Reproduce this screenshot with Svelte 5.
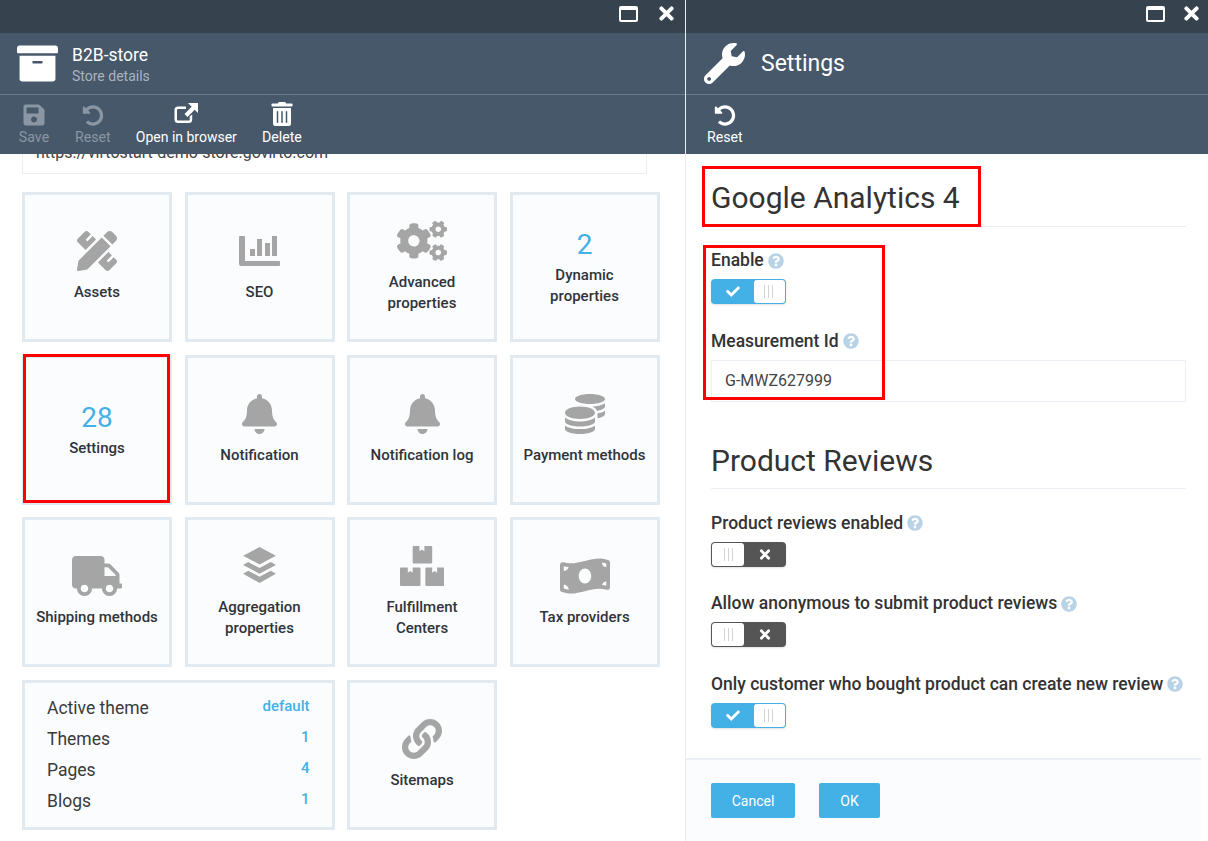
<script>
    const icons = {
        ruler: ["0 0 512 512", "M109.46 244.04l134.58-134.56-44.12-44.12-61.68 61.68a7.919 7.919 0 0 1-11.21 0l-11.21-11.21c-3.1-3.1-3.1-8.12 0-11.21l61.68-61.68-33.64-33.65C131.47-3.1 111.39-3.1 99 9.29L9.29 99c-12.38 12.39-12.39 32.47 0 44.86l100.17 100.18zm388.47-116.8c18.76-18.76 18.75-49.17 0-67.93l-45.25-45.25c-18.76-18.76-49.18-18.76-67.95 0l-46.02 46.01 113.2 113.2 46.02-46.03zM316.08 82.71l-297 296.96L.32 487.11c-2.53 14.49 10.09 27.11 24.59 24.56l107.45-18.84L429.28 195.9 316.08 82.71zm186.63 285.43l-33.64-33.64-61.68 61.68c-3.1 3.1-8.12 3.1-11.21 0l-11.21-11.21c-3.09-3.1-3.09-8.12 0-11.21l61.68-61.68-44.14-44.14L267.93 402.5l100.21 100.2c12.39 12.39 32.47 12.39 44.86 0l89.71-89.7c12.39-12.39 12.39-32.47 0-44.86z"],
        chart: ["0 0 41 30", "M1 0h4a1 1 0 0 1 1 1v24h34a1 1 0 0 1 1 1v3a1 1 0 0 1-1 1H2a2 2 0 0 1-2-2V1a1 1 0 0 1 1-1zM11 13h5v7h-5zM18 3h5v17h-5zM26 7h5v13h-5zM33 0h5v20h-5z"],
        cogs: ["0 0 640 512", "M512.1 191l-8.2 14.3c-3 5.3-9.4 7.5-15.1 5.4-11.8-4.4-22.6-10.7-32.1-18.6-4.6-3.8-5.8-10.5-2.8-15.7l8.2-14.3c-6.9-8-12.3-17.3-15.9-27.4h-16.5c-6 0-11.2-4.3-12.2-10.3-2-12-2.1-24.6 0-37.1 1-6 6.2-10.4 12.2-10.4h16.5c3.6-10.1 9-19.4 15.9-27.4l-8.2-14.3c-3-5.2-1.9-11.9 2.8-15.7 9.5-7.9 20.4-14.2 32.1-18.6 5.7-2.1 12.1.1 15.1 5.4l8.2 14.3c10.5-1.9 21.2-1.9 31.7 0L552 6.3c3-5.3 9.4-7.5 15.1-5.4 11.8 4.4 22.6 10.7 32.1 18.6 4.6 3.8 5.8 10.5 2.8 15.7l-8.2 14.3c6.9 8 12.3 17.3 15.9 27.4h16.5c6 0 11.2 4.3 12.2 10.3 2 12 2.1 24.6 0 37.1-1 6-6.2 10.4-12.2 10.4h-16.5c-3.6 10.1-9 19.4-15.9 27.4l8.2 14.3c3 5.2 1.9 11.9-2.8 15.7-9.5 7.9-20.4 14.2-32.1 18.6-5.7 2.1-12.1-.1-15.1-5.4l-8.2-14.3c-10.4 1.9-21.2 1.9-31.7 0zm-10.5-58.8c38.5 29.6 82.4-14.3 52.8-52.8-38.5-29.7-82.4 14.3-52.8 52.8zM386.3 286.1l33.7 16.8c10.1 5.8 14.5 18.1 10.5 29.1-8.9 24.2-26.4 46.4-42.6 65.8-7.4 8.9-20.2 11.1-30.3 5.3l-29.1-16.8c-16 13.7-34.6 24.6-54.9 31.7v33.6c0 11.6-8.3 21.6-19.7 23.6-24.6 4.2-50.4 4.4-75.9 0-11.5-2-20-11.9-20-23.6V418c-20.3-7.2-38.9-18-54.9-31.7L74 403c-10 5.8-22.9 3.6-30.3-5.3-16.2-19.4-33.3-41.6-42.2-65.7-4-10.9.4-23.2 10.5-29.1l33.3-16.8c-3.9-20.9-3.9-42.4 0-63.4L12 205.8c-10.1-5.8-14.6-18.1-10.5-29 8.9-24.2 26-46.4 42.2-65.8 7.4-8.9 20.2-11.1 30.3-5.3l29.1 16.8c16-13.7 34.6-24.6 54.9-31.7V57.1c0-11.5 8.2-21.5 19.6-23.5 24.6-4.2 50.5-4.4 76-.1 11.5 2 20 11.9 20 23.6v33.6c20.3 7.2 38.9 18 54.9 31.7l29.1-16.8c10-5.8 22.9-3.6 30.3 5.3 16.2 19.4 33.2 41.6 42.1 65.8 4 10.9.1 23.2-10 29.1l-33.7 16.8c3.9 21 3.9 42.5 0 63.5zm-117.6 21.1c59.2-77-28.7-164.9-105.7-105.7-59.2 77 28.7 164.9 105.7 105.7zm243.4 182.7l-8.2 14.3c-3 5.3-9.4 7.5-15.1 5.4-11.8-4.4-22.6-10.7-32.1-18.6-4.6-3.8-5.8-10.5-2.8-15.7l8.2-14.3c-6.9-8-12.3-17.3-15.9-27.4h-16.5c-6 0-11.2-4.3-12.2-10.3-2-12-2.1-24.6 0-37.1 1-6 6.2-10.4 12.2-10.4h16.5c3.6-10.1 9-19.4 15.9-27.4l-8.2-14.3c-3-5.2-1.9-11.9 2.8-15.7 9.5-7.9 20.4-14.2 32.1-18.6 5.7-2.1 12.1.1 15.1 5.4l8.2 14.3c10.5-1.9 21.2-1.9 31.7 0l8.2-14.3c3-5.3 9.4-7.5 15.1-5.4 11.8 4.4 22.6 10.7 32.1 18.6 4.6 3.8 5.8 10.5 2.8 15.7l-8.2 14.3c6.9 8 12.3 17.3 15.9 27.4h16.5c6 0 11.2 4.3 12.2 10.3 2 12 2.1 24.6 0 37.1-1 6-6.2 10.4-12.2 10.4h-16.5c-3.6 10.1-9 19.4-15.9 27.4l8.2 14.3c3 5.2 1.9 11.9-2.8 15.7-9.5 7.9-20.4 14.2-32.1 18.6-5.7 2.1-12.1-.1-15.1-5.4l-8.2-14.3c-10.4 1.9-21.2 1.9-31.7 0zM501.6 431c38.5 29.6 82.4-14.3 52.8-52.8-38.5-29.6-82.4 14.3-52.8 52.8z"],
        bell: ["0 0 448 512", "M224 512c35.32 0 63.97-28.65 63.97-64H160.03c0 35.35 28.65 64 63.97 64zm215.39-149.71c-19.32-20.76-55.47-51.99-55.47-154.29 0-77.7-54.48-139.9-127.94-155.16V32c0-17.67-14.32-32-31.98-32s-31.98 14.33-31.98 32v20.84C118.56 68.1 64.08 130.3 64.08 208c0 102.3-36.15 133.53-55.47 154.29-6 6.45-8.66 14.16-8.61 21.71.11 16.4 12.98 32 32.1 32h383.8c19.12 0 32-15.6 32.1-32 .05-7.55-2.61-15.27-8.61-21.71z"],
        coins: ["0 0 512 512", "M0 405.3V448c0 35.3 86 64 192 64s192-28.7 192-64v-42.7C342.7 434.4 267.2 448 192 448S41.3 434.4 0 405.3zM320 128c106 0 192-28.7 192-64S426 0 320 0 128 28.7 128 64s86 64 192 64zM0 300.4V352c0 35.3 86 64 192 64s192-28.7 192-64v-51.6c-41.3 34-116.9 51.6-192 51.6S41.3 334.4 0 300.4zm416 11c57.3-11.1 96-31.7 96-55.4v-42.7c-23.2 16.4-57.3 27.6-96 34.5v63.6zM192 160C86 160 0 195.8 0 240s86 80 192 80 192-35.8 192-80-86-80-192-80zm219.3 56.3c60-10.8 100.7-32 100.7-56.3v-42.7c-35.5 25.1-96.5 38.6-160.7 41.8 29.5 14.3 51.2 33.5 60 57.2z"],
        truck: ["0 0 640 512", "M624 352h-16V243.9c0-12.7-5.1-24.9-14.1-33.9L494 110.1c-9-9-21.2-14.1-33.9-14.1H416V48c0-26.5-21.5-48-48-48H48C21.5 0 0 21.5 0 48v320c0 26.5 21.5 48 48 48h16c0 53 43 96 96 96s96-43 96-96h128c0 53 43 96 96 96s96-43 96-96h48c8.8 0 16-7.2 16-16v-32c0-8.8-7.2-16-16-16zM160 464c-26.5 0-48-21.5-48-48s21.5-48 48-48 48 21.5 48 48-21.5 48-48 48zm320 0c-26.5 0-48-21.5-48-48s21.5-48 48-48 48 21.5 48 48-21.5 48-48 48zm80-208H416V144h44.1l99.9 99.9V256z"],
        layers: ["0 0 40 40", "M20 2L36 10.5 20 19 4 10.5zM9 16.5l11 6 11-6 5 3-16 8.500-16-8.500zM9 25l11 6 11-6 5 3-16 9-16-9z"],
        boxes: ["0 0 46 41", "M13 0h7v5.500l2.500-2 2.500 2V0h7a1 1 0 0 1 1 1v16a1 1 0 0 1-1 1H14a1 1 0 0 1-1-1V1a1 1 0 0 1 1-1zM1 22h7v5.500l2.500-2 2.500 2V22h7a1 1 0 0 1 1 1v17a1 1 0 0 1-1 1H1a1 1 0 0 1-1-1V23a1 1 0 0 1 1-1zM27 22h6v5.500l2.500-2 2.500 2V22h7a1 1 0 0 1 1 1v17a1 1 0 0 1-1 1H27a1 1 0 0 1-1-1V23a1 1 0 0 1 1-1z"],
        money: ["0 0 640 512", "M621.16 54.46C582.37 38.19 543.55 32 504.75 32c-123.17-.01-246.33 62.34-369.5 62.34-30.89 0-61.76-3.92-92.65-13.72-3.47-1.1-6.95-1.62-10.35-1.62C15.04 79 0 92.32 0 110.81v317.26c0 12.63 7.23 24.6 18.84 29.46C57.63 473.81 96.45 480 135.25 480c123.17 0 246.34-62.35 369.51-62.35 30.89 0 61.76 3.92 92.65 13.72 3.47 1.1 6.95 1.62 10.35 1.62 17.21 0 32.25-13.32 32.25-31.81V83.93c-.01-12.64-7.24-24.6-18.85-29.47zM48 132.22c20.12 5.04 41.12 7.57 62.72 8.93C104.84 170.54 79 192.69 48 192.69v-60.47zm0 285v-47.78c34.37 0 62.18 27.27 63.71 61.4-22.53-1.81-43.59-6.31-63.71-13.62zM320 352c-44.19 0-80-42.99-80-96 0-53.02 35.82-96 80-96s80 42.98 80 96c0 53.03-35.83 96-80 96zm272 27.78c-17.52-4.39-35.71-6.85-54.32-8.44 5.87-26.08 27.5-45.88 54.32-49.28v57.72zm0-236.11c-30.89-3.91-54.86-29.7-55.81-61.55 19.54 2.17 38.09 6.69 55.81 14.47v47.08z"],
        link: ["0 0 512 512", "M326.612 185.391c59.747 59.809 58.927 155.698.36 214.59-.11.12-.24.25-.36.37l-67.2 67.2c-59.27 59.27-155.699 59.262-214.96 0-59.27-59.26-59.27-155.7 0-214.96l37.106-37.106c9.84-9.84 26.786-3.3 27.294 10.606.648 17.722 3.826 35.527 9.69 52.721 1.986 5.822.567 12.262-3.783 16.612l-13.087 13.087c-28.026 28.026-28.905 73.66-1.155 101.96 28.024 28.579 74.086 28.749 102.325.51l67.2-67.19c28.191-28.191 28.073-73.757 0-101.83-3.701-3.694-7.429-6.564-10.341-8.569a16.037 16.037 0 0 1-6.947-12.606c-.396-10.567 3.348-21.456 11.698-29.806l21.054-21.055c5.521-5.521 14.182-6.199 20.584-1.731a152.482 152.482 0 0 1 20.522 17.197zM467.547 44.449c-59.261-59.262-155.69-59.27-214.96 0l-67.2 67.2c-.12.12-.25.25-.36.37-58.566 58.892-59.387 154.781.36 214.59a152.454 152.454 0 0 0 20.521 17.196c6.402 4.468 15.064 3.789 20.584-1.731l21.054-21.055c8.35-8.35 12.094-19.239 11.698-29.806a16.037 16.037 0 0 0-6.947-12.606c-2.912-2.005-6.64-4.875-10.341-8.569-28.073-28.073-28.191-73.639 0-101.83l67.2-67.19c28.239-28.239 74.3-28.069 102.325.51 27.75 28.3 26.872 73.934-1.155 101.96l-13.087 13.087c-4.35 4.35-5.769 10.79-3.783 16.612 5.864 17.194 9.042 34.999 9.69 52.721.509 13.906 17.454 20.446 27.294 10.606l37.106-37.106c59.271-59.259 59.271-155.699.001-214.959z"],
        save: ["0 0 448 512", "M433.941 129.941l-83.882-83.882A48 48 0 0 0 316.118 32H48C21.49 32 0 53.49 0 80v352c0 26.51 21.49 48 48 48h352c26.51 0 48-21.49 48-48V163.882a48 48 0 0 0-14.059-33.941zM224 416c-35.346 0-64-28.654-64-64 0-35.346 28.654-64 64-64s64 28.654 64 64c0 35.346-28.654 64-64 64zm96-304.52V212c0 6.627-5.373 12-12 12H76c-6.627 0-12-5.373-12-12V108c0-6.627 5.373-12 12-12h228.52c3.183 0 6.235 1.264 8.485 3.515l3.48 3.48A11.996 11.996 0 0 1 320 111.48z"],
        undo: ["0 0 512 512", "M255.545 8c-66.269.119-126.438 26.233-170.86 68.685L48.971 40.971C33.851 25.851 8 36.559 8 57.941V192c0 13.255 10.745 24 24 24h134.059c21.382 0 32.09-25.851 16.971-40.971l-41.75-41.75c30.864-28.899 70.801-44.907 113.23-45.273 92.398-.798 170.283 73.977 169.484 169.442C423.236 348.009 349.816 424 256 424c-41.127 0-79.997-14.678-110.63-41.556-4.743-4.161-11.906-3.908-16.368.553L89.34 422.659c-4.872 4.872-4.631 12.815.482 17.433C133.798 479.813 192.074 504 256 504c136.966 0 247.999-111.033 248-247.998C504.001 119.193 392.354 7.755 255.545 8z"],
        open: ["0 0 24 20", "M18.200 11.500v5a3.500 3.500 0 0 1-3.500 3.500H4a3.500 3.500 0 0 1-3.500-3.500V7A3.500 3.500 0 0 1 4 3.500h8V6H4A1 1 0 0 0 3 7v9.500a1 1 0 0 0 1 1h10.700a1 1 0 0 0 1-1v-3zM14 0h10v10l-3.300-3.300-7.200 7.200-3-3 7.200-7.200z"],
        trash: ["0 0 448 512", "M32 464a48 48 0 0 0 48 48h288a48 48 0 0 0 48-48V128H32zm272-256a16 16 0 0 1 32 0v224a16 16 0 0 1-32 0zm-96 0a16 16 0 0 1 32 0v224a16 16 0 0 1-32 0zm-96 0a16 16 0 0 1 32 0v224a16 16 0 0 1-32 0zM432 32H312l-9.400-18.700A24 24 0 0 0 281.100 0H166.800a23.720 23.720 0 0 0-21.400 13.300L136 32H16A16 16 0 0 0 0 48v32a16 16 0 0 0 16 16h416a16 16 0 0 0 16-16V48a16 16 0 0 0-16-16z"],
        archive: ["0 0 512 512", "M32 448c0 17.700 14.300 32 32 32h384c17.700 0 32-14.300 32-32V160H32v288zm160-212c0-6.600 5.400-12 12-12h104c6.600 0 12 5.400 12 12v8c0 6.600-5.400 12-12 12H204c-6.600 0-12-5.400-12-12v-8zM480 32H32C14.300 32 0 46.300 0 64v48c0 8.800 7.200 16 16 16h480c8.800 0 16-7.200 16-16V64c0-17.700-14.300-32-32-32z"],
        wrench: ["0 0 512 512", "M507.730 109.100c-2.240-9.030-13.540-12.090-20.120-5.510l-74.360 74.360-67.880-11.310-11.310-67.880 74.360-74.360c6.620-6.620 3.430-17.900-5.660-20.160-47.380-11.740-99.550.91-136.580 37.930-39.640 39.640-50.550 97.100-34.050 147.200L18.740 402.760c-24.990 24.990-24.990 65.510 0 90.500 24.990 24.990 65.510 24.990 90.500 0l213.210-213.210c50.120 16.710 107.470 5.680 147.370-34.220 37.070-37.070 49.700-89.320 37.910-136.730zM64 472c-13.250 0-24-10.750-24-24 0-13.260 10.750-24 24-24s24 10.740 24 24c0 13.250-10.750 24-24 24z"],
        times: ["0 0 352 512", "M242.720 256l100.070-100.070c12.280-12.280 12.280-32.190 0-44.480l-22.240-22.240c-12.280-12.280-32.190-12.280-44.480 0L176 189.280 75.930 89.210c-12.280-12.280-32.190-12.280-44.480 0L9.210 111.450c-12.280 12.280-12.280 32.190 0 44.480L109.280 256 9.210 356.070c-12.280 12.280-12.280 32.190 0 44.480l22.240 22.240c12.280 12.280 32.200 12.280 44.480 0L176 322.720l100.070 100.070c12.280 12.280 32.200 12.280 44.480 0l22.240-22.240c12.280-12.280 12.280-32.190 0-44.480L242.720 256z"],
        check: ["0 0 512 512", "M173.898 439.404l-166.400-166.400c-9.997-9.997-9.997-26.206 0-36.204l36.203-36.204c9.997-9.998 26.207-9.998 36.204 0L192 312.690 432.095 72.596c9.997-9.997 26.207-9.997 36.204 0l36.203 36.204c9.997 9.997 9.997 26.206 0 36.204l-294.400 294.401c-9.998 9.997-26.207 9.997-36.204-.001z"],
        help: ["0 0 512 512", "M504 256c0 136.997-111.043 248-248 248S8 392.997 8 256C8 119.083 119.043 8 256 8s248 111.083 248 248zM262.655 90c-54.497 0-89.255 22.957-116.549 63.758-3.536 5.286-2.353 12.415 2.715 16.258l34.699 26.310c5.205 3.947 12.621 3.008 16.665-2.122 17.864-22.658 30.113-35.797 57.303-35.797 20.429 0 45.698 13.148 45.698 32.958 0 14.976-12.363 22.667-32.534 33.976C247.128 238.528 216 254.941 216 296v4c0 6.627 5.373 12 12 12h56c6.627 0 12-5.373 12-12v-1.333c0-28.462 83.186-29.647 83.186-106.667 0-58.002-60.165-102-116.531-102zM256 338c-25.365 0-46 20.635-46 46 0 25.364 20.635 46 46 46s46-20.636 46-46c0-25.365-20.635-46-46-46z"]
    };

    const tiles = [
        { icon: "ruler", label: "Assets" },
        { icon: "chart", label: "SEO" },
        { icon: "cogs", label: "Advanced properties" },
        { count: 2, label: "Dynamic properties" },
        { count: 28, label: "Settings" },
        { icon: "bell", label: "Notification" },
        { icon: "bell", label: "Notification log" },
        { icon: "coins", label: "Payment methods" },
        { icon: "truck", label: "Shipping methods" },
        { icon: "layers", label: "Aggregation properties" },
        { icon: "boxes", label: "Fulfillment Centers" },
        { icon: "money", label: "Tax providers" }
    ];

    const themeRows = [
        { name: "Active theme", value: "default" },
        { name: "Themes", value: 1 },
        { name: "Pages", value: 4 },
        { name: "Blogs", value: 1 }
    ];

    const reviewFields = [
        { label: "Product reviews enabled", on: false },
        { label: "Allow anonymous to submit product reviews", on: false },
        { label: "Only customer who bought product can create new review", on: true }
    ];
</script>

{#snippet icon(name, cls)}
    <svg class={cls} viewBox={icons[name][0]} aria-hidden="true"><path d={icons[name][1]} /></svg>
{/snippet}

{#snippet windowControls()}
    <div class="topbar">
        <span class="maximize"></span>
        {@render icon("times", "close")}
    </div>
{/snippet}

{#snippet toggle(on)}
    <div class="toggle" class:on>
        <span class="state">{@render icon(on ? "check" : "times", "state-icon")}</span>
        <span class="knob"><i></i><i></i><i></i></span>
    </div>
{/snippet}

{#snippet label(text)}
    <div class="field-label">{text} {@render icon("help", "help")}</div>
{/snippet}

<div class="page">
    <section class="blade left">
        {@render windowControls()}
        <header class="head">
            {@render icon("archive", "head-icon")}
            <div class="head-text">
                <div class="title">B2B-store</div>
                <div class="subtitle">Store details</div>
            </div>
        </header>
        <nav class="toolbar">
            <div class="tool disabled">{@render icon("save", "tool-icon")}<span>Save</span></div>
            <div class="tool disabled">{@render icon("undo", "tool-icon undo")}<span>Reset</span></div>
            <div class="tool narrow">{@render icon("open", "tool-icon open")}<span>Open in browser</span></div>
            <div class="tool">{@render icon("trash", "tool-icon trash")}<span>Delete</span></div>
        </nav>
        <div class="body">
            <div class="url">https://virtostart-demo-store.govirto.com</div>
            <div class="grid">
                {#each tiles as tile}
                    <div class="tile" class:marked={tile.label === "Settings"}>
                        {#if tile.icon}
                            {@render icon(tile.icon, "tile-icon " + tile.icon)}
                        {:else}
                            <div class="count">{tile.count}</div>
                        {/if}
                        <div class="tile-label">{tile.label}</div>
                    </div>
                {/each}
                <div class="tile themes">
                    {#each themeRows as row}
                        <div class="theme-row">
                            <span>{row.name}</span>
                            <b>{row.value}</b>
                        </div>
                    {/each}
                </div>
                <div class="tile">
                    {@render icon("link", "tile-icon")}
                    <div class="tile-label">Sitemaps</div>
                </div>
            </div>
        </div>
    </section>

    <section class="blade right">
        {@render windowControls()}
        <header class="head">
            {@render icon("wrench", "head-icon wrench")}
            <div class="big-title">Settings</div>
        </header>
        <nav class="toolbar">
            <div class="tool">{@render icon("undo", "tool-icon undo")}<span>Reset</span></div>
        </nav>
        <div class="body form">
            <div class="marked-wrap">
                <h2>Google Analytics 4</h2>
                <span class="red heading-mark"></span>
                <span class="red fields-mark"></span>
            </div>
            <div class="field">
                {@render label("Enable")}
                {@render toggle(true)}
            </div>
            <div class="field">
                {@render label("Measurement Id")}
                <div class="input">G-MWZ627999</div>
            </div>
            <h2 class="second">Product Reviews</h2>
            {#each reviewFields as item}
                <div class="field">
                    {@render label(item.label)}
                    {@render toggle(item.on)}
                </div>
            {/each}
        </div>
        <footer class="foot">
            <button>Cancel</button>
            <button class="ok">OK</button>
        </footer>
    </section>
</div>

<style>
    :global(body) {
        margin: 0;
        background: #fff;
    }

    .page {
        display: flex;
        width: 1208px;
        height: 841px;
        overflow: hidden;
        font-family: Roboto, "Liberation Sans", sans-serif;
        color: #333;
    }

    .blade {
        display: flex;
        flex-direction: column;
        height: 841px;
        min-width: 0;
    }

    .left {
        width: 685px;
        border-right: 1px solid #e9edf1;
    }

    .right {
        width: 522px;
    }

    .topbar {
        box-sizing: border-box;
        display: flex;
        align-items: center;
        justify-content: flex-end;
        height: 33px;
        padding: 0 11px 6px 0;
        gap: 21px;
        background: #36434f;
    }

    .right .topbar {
        padding-right: 9px;
        gap: 19px;
    }

    .maximize {
        box-sizing: border-box;
        width: 19px;
        height: 16px;
        border: 2px solid #fff;
        border-top-width: 4px;
        border-radius: 2px;
    }

    .close {
        width: 15px;
        height: 21px;
        fill: #fff;
    }

    .head {
        display: flex;
        align-items: center;
        height: 61px;
        padding-left: 17px;
        gap: 14px;
        background: #47586b;
        border-bottom: 1px solid #6c7a89;
        color: #fff;
    }

    .head-icon {
        width: 41px;
        height: 41px;
        fill: #fff;
    }

    .head-text {
        margin-top: 4px;
    }

    .title {
        font-size: 17.5px;
        line-height: 21px;
    }

    .subtitle {
        font-size: 14px;
        line-height: 20px;
        color: #a9b3be;
    }

    .right .head {
        padding-left: 18px;
        gap: 16px;
    }

    .big-title {
        font-size: 23px;
    }

    .toolbar {
        display: flex;
        height: 59px;
        padding-left: 18px;
        gap: 25px;
        background: #47586b;
        color: #fff;
    }

    .right .toolbar {
        padding-left: 21px;
    }

    .tool {
        display: flex;
        flex-direction: column;
        align-items: center;
        min-width: 32px;
        padding-top: 8px;
        font-size: 14.2px;
        line-height: 20px;
    }

    .tool.narrow {
        font-size: 14px;
    }

    .tool.disabled {
        color: #8a96a3;
    }

    .tool-icon {
        height: 24px;
        width: 24px;
        fill: currentColor;
    }

    .undo {
        height: 21px;
        margin-top: 2px;
        margin-bottom: 1px;
    }

    .open {
        height: 20px;
        margin-bottom: 4px;
    }

    .trash {
        margin-top: -1px;
        margin-bottom: 1px;
    }

    .body {
        flex: 1;
        min-height: 0;
        overflow: hidden;
    }

    .url {
        box-sizing: border-box;
        width: 625px;
        height: 41px;
        margin: -21px 0 0 22px;
        padding-left: 13px;
        border: 1px solid #eceef3;
        border-top: 0;
        font-size: 16px;
        line-height: 40px;
        color: #444;
    }

    .grid {
        display: grid;
        grid-template-columns: repeat(4, 150px);
        grid-auto-rows: 150px;
        gap: 12.5px;
        margin: 18px 0 0 22px;
    }

    .tile {
        position: relative;
        box-sizing: border-box;
        display: flex;
        flex-direction: column;
        align-items: center;
        justify-content: center;
        border: 3px solid #e1eaf1;
        background: #fbfcfe;
        text-align: center;
    }

    .marked::after {
        content: "";
        position: absolute;
        inset: -4px -1px -1px -2px;
        border: 3px solid #f00;
    }

    .tile-icon {
        height: 40px;
        width: auto;
        margin-bottom: 11px;
        fill: #a5a5a5;
    }

    .tile-icon.chart {
        height: 30px;
        margin: 5px 0 16px;
    }

    .tile-icon.layers {
        height: 41px;
    }

    .tile-label {
        max-width: 126px;
        font-size: 15px;
        font-weight: 500;
        line-height: 21px;
        color: #2f343a;
    }

    .count {
        font-size: 28px;
        line-height: 34px;
        margin-bottom: 3px;
        color: #43b0e6;
    }

    .themes {
        grid-column: span 2;
        align-items: stretch;
        padding: 0 22px;
    }

    .theme-row {
        display: flex;
        justify-content: space-between;
        height: 31px;
        font-size: 17.5px;
        line-height: 31px;
        color: #3a3a3a;
    }

    .theme-row b {
        font-size: 15px;
        font-weight: 500;
        line-height: 27px;
        color: #43b0e6;
    }

    .form {
        padding: 0 22px 0 25px;
    }

    .marked-wrap {
        position: relative;
    }

    h2 {
        margin: 0 0 22px;
        padding: 26px 0 10px;
        border-bottom: 1px solid #eceef5;
        font-size: 30px;
        font-weight: 400;
        line-height: 36px;
        color: #333;
    }

    h2.second {
        margin-top: 41px;
        padding: 0 0 9px;
        margin-bottom: 23px;
    }

    .red {
        position: absolute;
        box-sizing: border-box;
        border: 3px solid #f00;
    }

    .heading-mark {
        left: -9px;
        top: 12px;
        width: 279px;
        height: 61px;
    }

    .fields-mark {
        left: -8px;
        top: 91px;
        width: 182px;
        height: 155px;
    }

    .field {
        margin-bottom: 25.5px;
    }

    .field:last-of-type {
        margin-bottom: 0;
    }

    .field-label {
        display: flex;
        align-items: center;
        gap: 4px;
        padding-top: 1px;
        font-size: 17.5px;
        font-weight: 500;
        line-height: 21px;
        margin-bottom: 8px;
        color: #333;
    }

    .help {
        width: 16px;
        height: 16px;
        fill: #b8d2e6;
    }

    .toggle {
        position: relative;
        box-sizing: border-box;
        display: flex;
        width: 75px;
        height: 25px;
        padding: 1px;
        border-radius: 4px;
        background: #555;
        flex-direction: row-reverse;
        justify-content: space-between;
        box-shadow: 0 1px 2px rgba(0, 0, 0, 0.12);
    }

    .toggle.on {
        background: #43b0e6;
        flex-direction: row;
    }

    .state {
        display: flex;
        align-items: center;
        justify-content: center;
        width: 41px;
    }

    .state-icon {
        width: 14px;
        height: 15px;
        fill: #fff;
    }

    .knob {
        display: flex;
        align-items: center;
        justify-content: center;
        gap: 3px;
        width: 32px;
        border-radius: 3px;
        background: #fff;
    }

    .on .knob {
        box-sizing: border-box;
        width: 31px;
        padding-right: 3px;
    }

    .knob i {
        width: 1px;
        height: 13px;
        background: #d4d4d4;
    }

    .input {
        box-sizing: border-box;
        height: 42px;
        padding-left: 13px;
        border: 1px solid #eceef5;
        font-size: 16px;
        line-height: 40px;
        color: #444;
    }

    .foot {
        display: flex;
        gap: 24px;
        height: 83px;
        margin-right: 7px;
        padding: 23px 0 0 25px;
        box-sizing: border-box;
        border-top: 2px solid #eceef5;
        background: #fbfcfe;
    }

    button {
        width: 84px;
        height: 35px;
        padding: 0;
        border: 0;
        border-radius: 2px;
        background: #43b0e6;
        font: 400 14px Roboto, "Liberation Sans", sans-serif;
        color: #fff;
    }

    button.ok {
        width: 61px;
    }
</style>
